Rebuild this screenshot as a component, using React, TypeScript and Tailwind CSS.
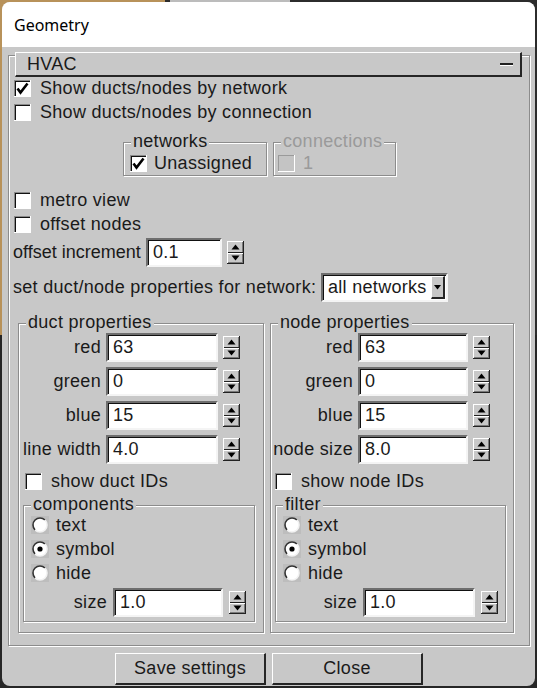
import React from 'react'

const groove = 'border border-[#8c8c8c] shadow-[inset_1px_1px_0_#fff,1px_1px_0_#fff]'
const sunken =
  'border-2 border-t-[#6e6e6e] border-l-[#6e6e6e] border-b-[#f4f4f4] border-r-[#f4f4f4] shadow-[inset_1px_1px_0_#111] bg-white'
const raised =
  'border-t border-l border-t-white border-l-white border-b-2 border-r-2 border-b-[#262626] border-r-[#262626] bg-[#c8c8c8]'

function Check({ checked = false, disabled = false }: { checked?: boolean; disabled?: boolean }) {
  return (
    <svg width="17" height="17" viewBox="0 0 17 17" shapeRendering="crispEdges" className="shrink-0">
      <rect width="17" height="17" fill={disabled ? '#c4c4c4' : '#fff'} />
      <path d="M0 0.5H17M0.5 0V17" stroke={disabled ? '#9a9a9a' : '#8a8a8a'} />
      {!disabled && <path d="M1 1.5H16M1.5 1V16" stroke="#111" />}
      <path d="M0 16.5H17M16.5 0V17" stroke="#fff" />
      {checked && (
        <path
          d="M3.5 8.5L6.5 12.5L13.5 3.5"
          stroke="#000"
          strokeWidth="2.6"
          fill="none"
          shapeRendering="geometricPrecision"
        />
      )}
    </svg>
  )
}

function Radio({ on = false }: { on?: boolean }) {
  return (
    <svg width="18" height="18" viewBox="0 0 18 18" className="shrink-0">
      <rect width="18" height="18" fill="#bdbdbd" />
      <circle cx="9" cy="9" r="7" fill="#fff" />
      <path d="M13.95 4.05A7 7 0 0 0 4.05 13.95" stroke="#333" strokeWidth="1.6" fill="none" />
      <path d="M4.05 13.95A7 7 0 0 0 13.95 4.05" stroke="#f2f2f2" strokeWidth="1.6" fill="none" />
      {on && <circle cx="9" cy="9" r="2.6" fill="#000" />}
    </svg>
  )
}

function Spin() {
  return (
    <svg width="17" height="23" viewBox="0 0 17 23" shapeRendering="crispEdges" className="shrink-0">
      <rect width="17" height="23" fill="#c8c8c8" />
      <path d="M0 0.5H16M0.5 0V22" stroke="#fff" />
      <path d="M1 21.5H16M15.5 1V22" stroke="#7a7a7a" />
      <path d="M0 22.5H17M16.5 0V23" stroke="#222" />
      <path d="M1 11.5H16" stroke="#222" />
      <path d="M1 12.5H16" stroke="#fff" />
      <path d="M4.5 8.5H12.5L8.5 3.5Z" fill="#000" shapeRendering="geometricPrecision" />
      <path d="M4.5 14.5H12.5L8.5 19.5Z" fill="#000" shapeRendering="geometricPrecision" />
    </svg>
  )
}

function Group({
  label,
  disabled = false,
  className,
  children,
}: {
  label: string
  disabled?: boolean
  className: string
  children: React.ReactNode
}) {
  return (
    <div className={`relative ${groove} ${className}`}>
      <span
        className={`absolute -top-[11px] left-[7px] bg-[#c8c8c8] px-[2px] leading-[18px] ${
          disabled ? 'text-[#9a9a9a]' : ''
        }`}
      >
        {label}
      </span>
      {children}
    </div>
  )
}

function Entry({ value, className }: { value: string; className: string }) {
  return (
    <div className={`flex h-[29px] items-center pl-[5px] ${sunken} ${className}`}>{value}</div>
  )
}

function CheckRow({ label, checked, className = '' }: { label: string; checked?: boolean; className?: string }) {
  return (
    <div className={`flex h-[24px] items-center gap-[9px] ${className}`}>
      <Check checked={checked} />
      <span>{label}</span>
    </div>
  )
}

function RadioRow({ label, on }: { label: string; on?: boolean }) {
  return (
    <div className="flex h-[24px] items-center gap-[7px]">
      <Radio on={on} />
      <span>{label}</span>
    </div>
  )
}

const colorRows = (last: [string, string]) => [
  ['red', '63'],
  ['green', '0'],
  ['blue', '15'],
  last,
]

function PropsBox({
  title,
  rows,
  idsLabel,
  subTitle,
  node,
}: {
  title: string
  rows: string[][]
  idsLabel: string
  subTitle: string
  node?: boolean
}) {
  return (
    <Group label={title} className={node ? 'h-[310px] w-[244px]' : 'h-[310px] w-[246px]'}>
      <div
        className={`mt-[9px] grid items-center gap-x-[5px] gap-y-[5px] ${
          node ? 'grid-cols-[82px_110px_17px]' : 'grid-cols-[82px_112px_17px]'
        }`}
      >
        {rows.map(([k, v]) => (
          <React.Fragment key={k}>
            <span className="whitespace-nowrap text-right leading-[29px]">{k}</span>
            <Entry value={v} className="w-full" />
            <Spin />
          </React.Fragment>
        ))}
      </div>
      <CheckRow label={idsLabel} className={node ? 'mt-[5px] pl-[4px]' : 'mt-[5px] pl-[6px]'} />
      <Group
        label={subTitle}
        className={node ? 'ml-[4px] mt-[12px] h-[117px] w-[231px]' : 'ml-[4px] mt-[12px] h-[117px] w-[232px]'}
      >
        <div className="flex flex-col pl-[7px] pt-[7px]">
          <RadioRow label="text" />
          <RadioRow label="symbol" on />
          <RadioRow label="hide" />
        </div>
        <div
          className={`mt-[3px] grid items-center gap-x-[6px] ${
            node ? 'grid-cols-[81px_112px_16px]' : 'grid-cols-[83px_110px_16px]'
          }`}
        >
          <span className="text-right">size</span>
          <Entry value="1.0" className="w-full" />
          <Spin />
        </div>
      </Group>
    </Group>
  )
}

export default function App() {
  return (
    <div className="h-[688px] w-[537px] bg-[#262626] bg-[linear-gradient(180deg,transparent_0_335px,#262626_335px),linear-gradient(90deg,#b8925a_0_165px,#2c2c2c_165px_170px,#bcbcbc_170px_290px,#2c2c2c_290px)] p-[2px] font-['Liberation_Sans',Arial,sans-serif] text-[18px] tracking-[0.3px] text-[#1a1a1a]">
      <div className="flex h-[684px] w-[533px] flex-col overflow-hidden rounded-[8px] bg-[#c8c8c8]">
        <div className="flex h-[45px] shrink-0 items-center bg-white pl-[12px] font-['Noto_Sans',sans-serif] text-[16px] tracking-normal text-black">
          Geometry
        </div>
        <div className="flex flex-col pl-[6px] pt-[8px]">
          <div className={`h-[591px] w-[522px] ${groove}`}>
            <div className={`-mt-[4px] ml-[6px] mr-[7px] flex h-[25px] items-center justify-between pl-[11px] pr-[7px] ${raised}`}>
              <span>HVAC</span>
              <span className="h-[3px] w-[13px] border-t-2 border-b border-t-[#222] border-b-white" />
            </div>
            <div className="flex flex-col px-[4px]">
              <CheckRow label="Show ducts/nodes by network" checked className="-mt-[1px] pl-[1px]" />
              <CheckRow label="Show ducts/nodes by connection" className="pl-[1px]" />
              <div className="ml-[110px] mt-[18px] flex gap-[6px]">
                <Group label="networks" className="h-[34px] w-[144px]">
                  <div className="flex items-center gap-[7px] pl-[6px] pt-[11px]">
                    <Check checked />
                    <span className="leading-[18px]">Unassigned</span>
                  </div>
                </Group>
                <Group label="connections" disabled className="h-[34px] w-[123px]">
                  <div className="flex items-center gap-[8px] pl-[4px] pt-[11px] text-[#9a9a9a]">
                    <Check disabled />
                    <span className="leading-[18px]">1</span>
                  </div>
                </Group>
              </div>
              <CheckRow label="metro view" className="mt-[12px] pl-[1px]" />
              <CheckRow label="offset nodes" className="pl-[1px]" />
              <div className="mt-[2px] flex items-center">
                <span className="w-[128px] whitespace-nowrap tracking-normal">offset increment</span>
                <Entry value="0.1" className="ml-[5px] w-[76px]" />
                <span className="ml-[5px] flex">
                  <Spin />
                </span>
              </div>
              <div className="mt-[6px] flex items-center">
                <span className="w-[303px] whitespace-nowrap">set duct/node properties for network:</span>
                <div className={`ml-[5px] flex h-[29px] w-[127px] items-center pl-[5px] pr-[1px] ${sunken}`}>
                  <span className="flex-1">all networks</span>
                  <span className={`flex h-[23px] w-[14px] items-center justify-center ${raised}`}>
                    <svg width="7" height="5" viewBox="0 0 7 5">
                      <path d="M0 0H7L3.5 4.5Z" fill="#000" />
                    </svg>
                  </span>
                </div>
              </div>
              <div className="ml-[5px] mt-[21px] flex gap-[6px]">
                <PropsBox
                  title="duct properties"
                  rows={colorRows(['line width', '4.0'])}
                  idsLabel="show duct IDs"
                  subTitle="components"
                />
                <PropsBox
                  title="node properties"
                  rows={colorRows(['node size', '8.0'])}
                  idsLabel="show node IDs"
                  subTitle="filter"
                  node
                />
              </div>
            </div>
          </div>
          <div className="ml-[107px] mt-[7px] flex gap-[6px]">
            <button className={`h-[32px] w-[151px] ${raised}`}>Save settings</button>
            <button className={`h-[32px] w-[151px] ${raised}`}>Close</button>
          </div>
        </div>
      </div>
    </div>
  )
}
